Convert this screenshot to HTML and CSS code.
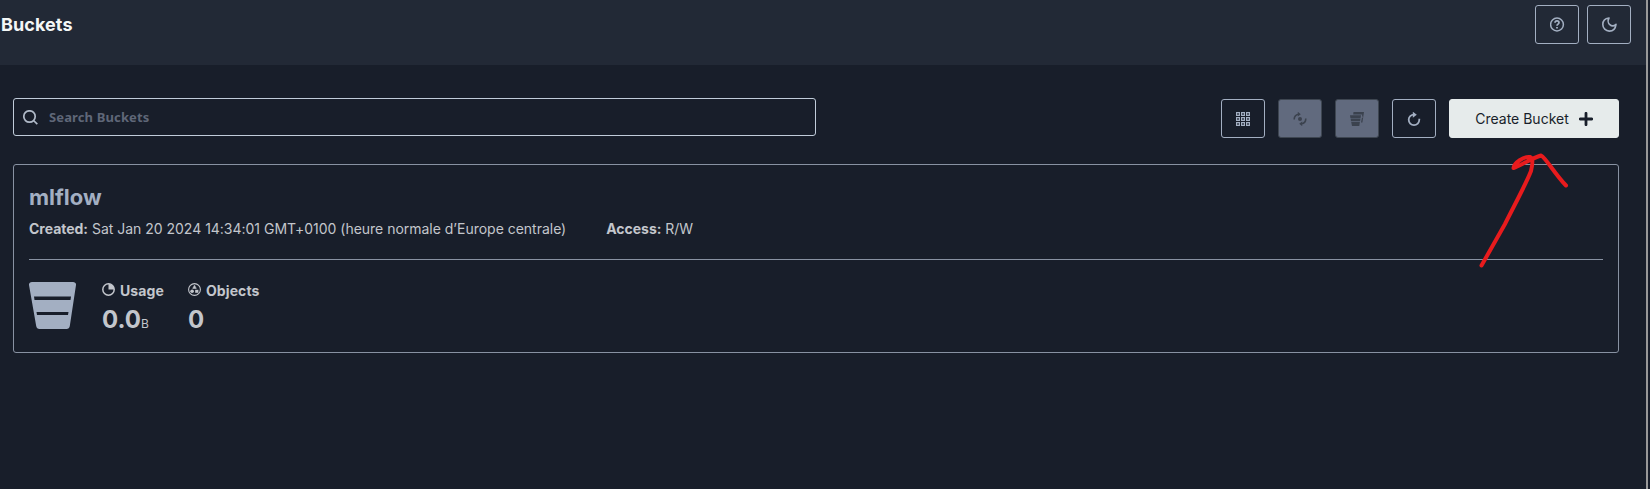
FILE: index.html
```html
<!DOCTYPE html>
<html lang="en">
<head>
<meta charset="utf-8">
<title>Buckets</title>
<link rel="stylesheet" href="styles.css">
</head>
<body>
<div class="page">
  <header class="header">
    <h1 class="title">Buckets</h1>
    <div class="header-actions">
      <button class="btn" aria-label="Help">
        <svg width="15" height="15" viewBox="0 0 15 15" fill="none" stroke="currentColor"><circle cx="7" cy="7.500" r="6.400" stroke-width="1.500"/><path d="M5 5.700c.1-2.600 4-2.500 4 0 0 1.400-2 1.400-2 3" stroke-width="1.700"/><path d="M6.100 10.700h1.800" stroke-width="1.600"/></svg>
      </button>
      <button class="btn" aria-label="Dark mode">
        <svg width="15" height="15" viewBox="0 0 15 15" fill="none" stroke="currentColor" stroke-width="1.600" stroke-linejoin="round"><path d="M7 1C2.800 1.400.8 4.300.8 7.500c0 3.700 3 6.600 6.500 6.600 3.300 0 6.200-2.300 6.700-6.800-2 1.900-4.600 1.800-6.200.3C6 6.200 5.700 3.300 7 1Z"/></svg>
      </button>
    </div>
  </header>
  <main class="content">
    <div class="toolbar">
      <label class="search">
        <svg width="15" height="15" viewBox="0 0 15 15" fill="none" stroke="currentColor" stroke-width="1.700"><circle cx="6.500" cy="6.500" r="5.700"/><path d="m10.500 10.500 3.800 3.600"/></svg>
        <input class="search-input" placeholder="Search Buckets">
      </label>
      <div class="actions">
        <button class="btn" aria-label="Grid view">
          <svg width="14" height="14" viewBox="0 0 14 14" fill="none" stroke="currentColor" stroke-width="1.200"><path d="M.6.6h2.800v2.800H.6zM5.600.6h2.800v2.800H5.600zM10.600.6h2.800v2.800h-2.800zM.6 5.600h2.800v2.800H.6zM5.600 5.600h2.800v2.800H5.600zM10.600 5.600h2.800v2.800h-2.800zM.6 10.600h2.800v2.800H.6zM5.600 10.600h2.800v2.800H5.600zM10.600 10.600h2.800v2.800h-2.800z"/></svg>
        </button>
        <button class="btn disabled" aria-label="Set replication">
          <svg width="14" height="14" viewBox="0 0 14 14" fill="none" stroke="currentColor" stroke-width="1.600"><circle cx="7" cy="7" r="2" fill="currentColor" stroke="none"/><path d="M1.200 7.500C1.200 4.500 2.800 2.600 5.500 2.200M12.800 6.500c0 3-1.600 4.900-4.300 5.300"/><path d="m4.800-.2 3 2.400-3 2.400zM9.200 14.200l-3-2.400 3-2.400z" fill="currentColor" stroke="none"/></svg>
        </button>
        <button class="btn disabled" aria-label="Lifecycle">
          <svg width="14" height="14" viewBox="0 0 14 14" fill="currentColor"><path d="M3.500 0H14l-1.600 10.500H11l.9-4.700h.8l.2-1.200h-.9l.2-2H3.200zM0 3.200h11l-.4 2.700H.4zM.6 6.500h9.900l-.4 2.800H1zM1.200 9.900h8.700l-.6 4.100H2z"/></svg>
        </button>
        <button class="btn" aria-label="Refresh">
          <svg width="14" height="14" viewBox="0 0 14 14" fill="none" stroke="currentColor" stroke-width="1.800"><path d="M7.500 2.700C3.800 2.500 1.700 5 1.700 7.800a5.300 5.300 0 0 0 10.600 0V6.700"/><path d="m5.800-.3 4 3-4 3z" fill="currentColor" stroke="none"/></svg>
        </button>
        <button class="btn create">Create Bucket
          <svg width="14" height="14" viewBox="0 0 14 14" fill="none" stroke="currentColor" stroke-width="2.800" stroke-linecap="round"><path d="M7 1.300v11.400M1.300 7h11.400"/></svg>
        </button>
      </div>
    </div>
    <section class="card">
      <h2 class="name">mlflow</h2>
      <div class="meta"><span><b>Created:</b> Sat Jan 20 2024 14:34:01 GMT+0100 (heure normale d’Europe centrale)</span><span><b>Access:</b> R/W</span></div>
      <div class="stats">
        <svg class="bucket" width="47" height="47" viewBox="0 0 47 47"><path fill="currentColor" d="M3 0h41c2 0 3.200 1.300 3 3l-6.200 41c-.3 2-1.500 3-3.300 3h-27c-1.800 0-3-1-3.300-3L0 3C-.1 1.300 1 0 3 0Z"/><path class="slot" d="M5 14.500h37l-.5 3.500h-36zM7.500 30h32l-.5 3H8z"/></svg>
        <div class="stat usage">
          <div class="label"><svg width="13" height="13" viewBox="0 0 13 13"><circle cx="6.500" cy="6.500" r="5.700" fill="none" stroke="currentColor" stroke-width="1.500"/><path d="M6.500.8v5.700h5.700A5.700 5.700 0 0 0 6.500.8Z" fill="currentColor"/></svg>Usage</div>
          <div class="value">0.0<span class="unit">B</span></div>
        </div>
        <div class="stat">
          <div class="label"><svg width="13" height="13" viewBox="0 0 13 13"><circle cx="6.500" cy="6.500" r="5.900" fill="none" stroke="currentColor" stroke-width="1.100"/><path d="m6.500 2.200 1.800 3.200H4.700z" fill="currentColor" stroke="currentColor" stroke-width=".6"/><circle cx="4.100" cy="8.300" r="1.800" fill="currentColor"/><path d="M7.200 6.800h3.200v3H7.200z" fill="currentColor"/></svg>Objects</div>
          <div class="value">0</div>
        </div>
      </div>
    </section>
  </main>
  <svg class="annotation" width="60" height="120" viewBox="1478 150 60 120" fill="none"><path d="M1481.500 265.500L1505 224C1515 204 1526 184 1531 171C1533 163 1533 158 1530 157C1524 156 1514 163 1513.500 168C1520 166 1532 158 1541 155.500C1546 158 1554 173 1566 185.500" stroke="#e81b1d" stroke-width="4" stroke-linecap="round" stroke-linejoin="round"/></svg>
</div>
</body>
</html>
```
FILE: styles.css
```css
* { box-sizing: border-box; }
body {
  margin: 0;
  background: #181e2a;
  color: #c3c6cc;
  font-family: Inter, "Liberation Sans", sans-serif;
  font-size: 14px;
}
.page {
  position: relative;
  width: 1648px;
  height: 489px;
  border-right: 2px solid #999;
  overflow: hidden;
}
.header {
  display: flex;
  justify-content: space-between;
  height: 65px;
  padding: 5px 15px 0 1px;
  background: #222936;
}
.title {
  margin: 9px 0 0;
  color: #f4f7f7;
  font-size: 18px;
  line-height: 22px;
  font-weight: 700;
  letter-spacing: 0.08px;
}
.header-actions { display: flex; gap: 8px; }
.btn {
  display: flex;
  align-items: center;
  justify-content: center;
  width: 44px;
  height: 39px;
  padding: 0;
  border: 1px solid #a3afc2;
  border-radius: 3px;
  background: none;
  color: #a3afc2;
  font: inherit;
}
.btn.disabled {
  border-color: #3e4651;
  background: #616a7e;
  color: #3b424e;
}
.btn.create {
  width: 170px;
  gap: 10px;
  border-color: #e6ebeb;
  background: #e6ebeb;
  color: #181e2a;
}
.content { padding: 33px 27px 0 13px; }
.toolbar { display: flex; justify-content: space-between; height: 66px; }
.search {
  display: flex;
  align-items: center;
  gap: 11px;
  width: 803px;
  height: 38px;
  padding-left: 9px;
  border: 1px solid #c0ccda;
  border-radius: 3px;
  color: #b0bac8;
}
.search-input {
  flex: 1;
  padding: 0;
  border: 0;
  outline: 0;
  background: none;
  font: 700 13px "Noto Sans", sans-serif;
  letter-spacing: 0.13px;
}
.search-input::placeholder { color: #5f6778; opacity: 1; }
.actions { display: flex; gap: 13px; padding-top: 1px; }
.card {
  height: 189px;
  padding: 19px 15px 0;
  border: 1px solid #8892a2;
  border-radius: 3px;
}
.name {
  margin: 0;
  color: #a3afc2;
  font-size: 22px;
  line-height: 26px;
}
.meta {
  display: flex;
  gap: 40px;
  height: 50px;
  padding-top: 10px;
  border-bottom: 1px solid #8892a2;
  line-height: 18px;
  letter-spacing: -0.015px;
}
.stats { display: flex; padding-top: 22px; }
.bucket { color: #a3afc2; }
.slot { fill: #181e2a; }
.usage { width: 86px; }
.bucket + .stat { margin-left: 26px; }
.label {
  display: flex;
  gap: 5px;
  line-height: 18px;
  font-weight: 700;
  letter-spacing: 0.08px;
}
.label svg { margin-top: 1px; }
.value {
  margin-top: 5px;
  font-size: 24px;
  line-height: 30px;
  font-weight: 700;
}
.unit { font-size: 12px; font-weight: 400; }
.annotation {
  position: absolute;
  left: 1478px;
  top: 150px;
  overflow: visible;
}
```
